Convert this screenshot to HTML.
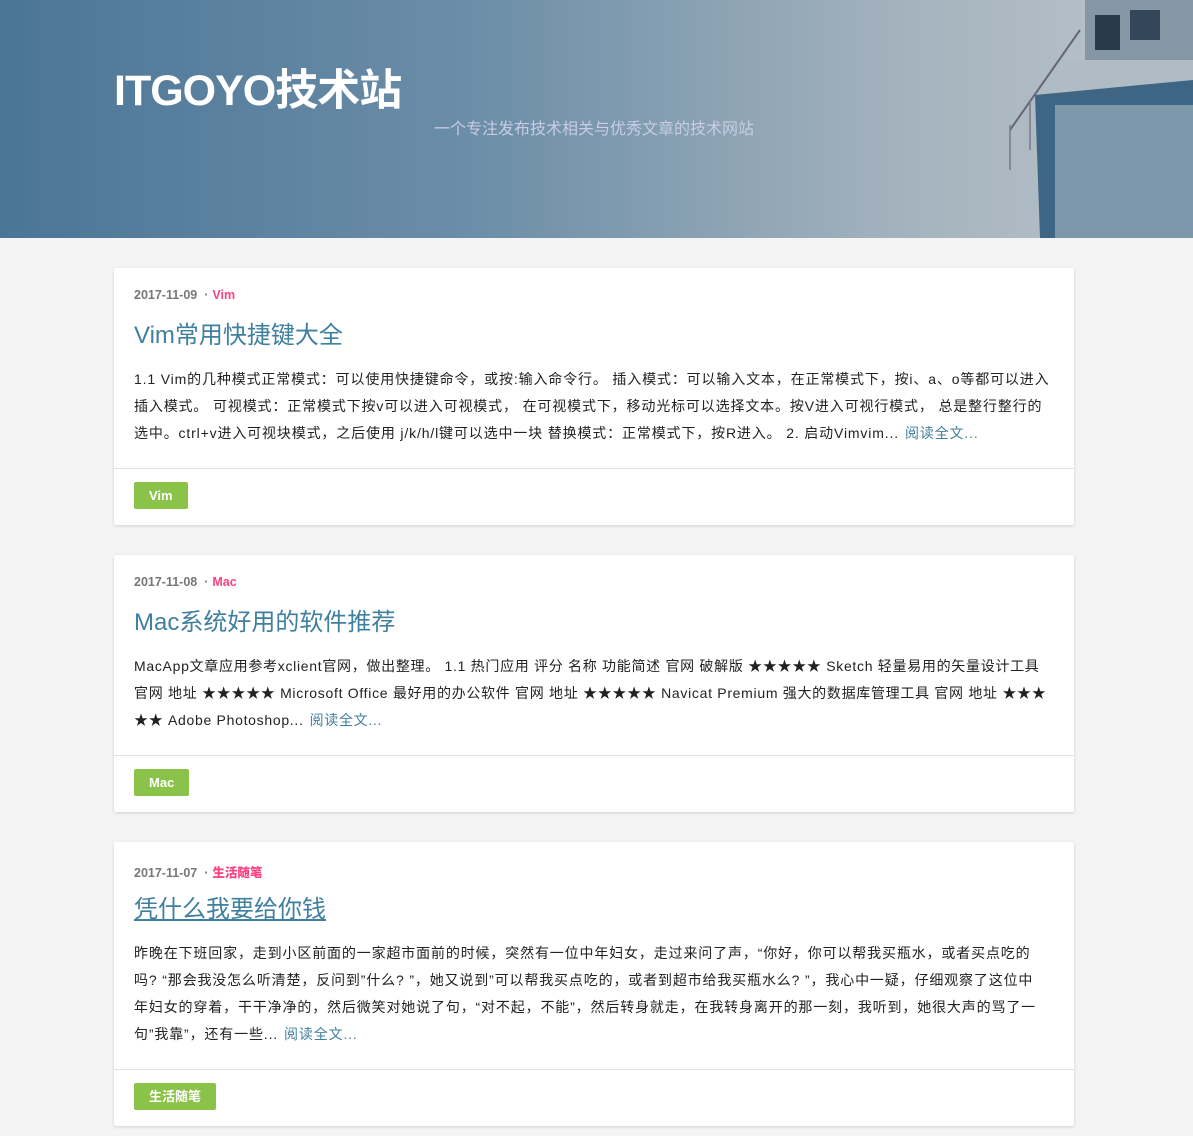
<!DOCTYPE html>
<html><head><meta charset="utf-8"><style>
*{margin:0;padding:0;box-sizing:border-box}
body{width:1193px;height:1136px;overflow:hidden;background:#f4f4f4;font-family:"Liberation Sans","Noto Sans CJK SC",sans-serif}
.hd{position:relative;height:238px;background:linear-gradient(90deg,#4b7596 0%,#6c8ea8 40%,#a3b2bd 75%,#bcc5ca 100%);overflow:hidden}
.hd h1{position:absolute;left:114px;top:56px;font-size:43px;color:#fff;font-weight:bold;letter-spacing:-1px}
.hd .sub{position:absolute;left:434px;top:115px;font-size:16px;color:#c8cde4}
.card{position:absolute;left:114px;width:960px;background:#fff;box-shadow:0 1px 3px rgba(0,0,0,.15);border-radius:2px}
.meta{position:absolute;left:20px;top:20px;font-size:12.5px;font-weight:bold;color:#777}
.meta b{color:#ff4081;margin-left:4px}
.tt{position:absolute;left:20px;top:47px;font-size:24px;color:#3f7f9f}
.bd{position:absolute;left:20px;top:98px;width:940px;font-size:14px;line-height:27px;color:#222;white-space:nowrap;letter-spacing:0.85px}
.bd a{color:#3f7f9f;margin-left:6px}
.ft{position:absolute;left:0;right:0;bottom:0;height:57px;border-top:1px solid #e3e3e3}
.tag{position:absolute;left:20px;top:13px;height:27px;line-height:27px;padding:0 15px;background:#8bc34a;color:#fff;font-size:13px;font-weight:bold;border-radius:2px}
</style></head><body>
<div class="hd">
<svg style="position:absolute;left:995px;top:0" width="198" height="238">
<rect x="90" y="0" width="108" height="60" fill="#8597a6"/>
<rect x="100" y="15" width="25" height="35" fill="#2a3a4a"/><rect x="135" y="10" width="30" height="30" fill="#34475a"/>
<rect x="60" y="60" width="138" height="30" fill="#b0bcc4"/>
<polygon points="40,95 198,80 198,238 45,238" fill="#3f6585"/>
<rect x="60" y="105" width="138" height="133" fill="#7d97ab"/>
<line x1="15" y1="130" x2="85" y2="30" stroke="#667" stroke-width="2"/>
<line x1="15" y1="125" x2="15" y2="170" stroke="#778" stroke-width="1.5"/>
<line x1="35" y1="100" x2="35" y2="150" stroke="#778" stroke-width="1.5"/>
</svg>
<h1>ITGOYO技术站</h1>
<div class="sub">一个专注发布技术相关与优秀文章的技术网站</div>
</div>

<div class="card" style="top:268px;height:257px">
<div class="meta">2017-11-09 &nbsp;·<b>Vim</b></div>
<div class="tt">Vim常用快捷键大全</div>
<div class="bd">1.1 Vim的几种模式正常模式：可以使用快捷键命令，或按:输入命令行。 插入模式：可以输入文本，在正常模式下，按i、a、o等都可以进入<br>插入模式。 可视模式：正常模式下按v可以进入可视模式， 在可视模式下，移动光标可以选择文本。按V进入可视行模式， 总是整行整行的<br>选中。ctrl+v进入可视块模式，之后使用 j/k/h/l键可以选中一块 替换模式：正常模式下，按R进入。 2. 启动Vimvim...<a>阅读全文...</a></div>
<div class="ft"><span class="tag">Vim</span></div>
</div>

<div class="card" style="top:555px;height:257px">
<div class="meta">2017-11-08 &nbsp;·<b>Mac</b></div>
<div class="tt">Mac系统好用的软件推荐</div>
<div class="bd" style="letter-spacing:0.7px">MacApp文章应用参考xclient官网，做出整理。 1.1 热门应用 评分 名称 功能简述 官网 破解版 ★★★★★ Sketch 轻量易用的矢量设计工具<br>官网 地址 ★★★★★ Microsoft Office 最好用的办公软件 官网 地址 ★★★★★ Navicat Premium 强大的数据库管理工具 官网 地址 ★★★<br>★★ Adobe Photoshop...<a>阅读全文...</a></div>
<div class="ft"><span class="tag">Mac</span></div>
</div>

<div class="card" style="top:842px;height:284px">
<div class="meta">2017-11-07 &nbsp;·<b>生活随笔</b></div>
<div class="tt" style="text-decoration:underline">凭什么我要给你钱</div>
<div class="bd">昨晚在下班回家，走到小区前面的一家超市面前的时候，突然有一位中年妇女，走过来问了声，“你好，你可以帮我买瓶水，或者买点吃的<br>吗? “那会我没怎么听清楚，反问到”什么? ”，她又说到”可以帮我买点吃的，或者到超市给我买瓶水么? ”，我心中一疑，仔细观察了这位中<br>年妇女的穿着，干干净净的，然后微笑对她说了句，“对不起，不能”，然后转身就走，在我转身离开的那一刻，我听到，她很大声的骂了一<br>句”我靠”，还有一些...<a>阅读全文...</a></div>
<div class="ft"><span class="tag">生活随笔</span></div>
</div>
</body></html>
